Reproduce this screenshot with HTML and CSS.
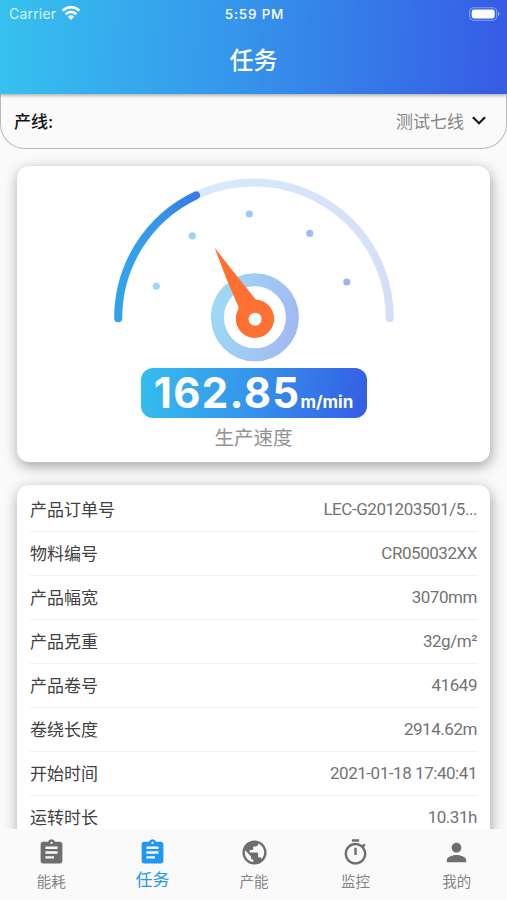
FILE: index.html
```html
<!DOCTYPE html>
<html lang="zh-CN">
<head>
<meta charset="utf-8">
<title>任务</title>
<link rel="stylesheet" href="styles.css">
</head>
<body>
<div class="app">
  <header class="header">
    <div class="status">
      <div class="carrier"><span>Carrier</span>
        <svg width="20" height="16" viewBox="0 0 20 16" fill="none" stroke="#fff" stroke-width="2.7"><path d="M1.6 5.700Q10-1.400 18.400 5.700M4.600 9.200Q10 4.700 15.400 9.200"/><path d="M6.800 11.500Q10 8.900 13.200 11.500L10 14.900Z" fill="#fff" stroke="none"/></svg>
      </div>
      <div class="clock">5:59 PM</div>
      <div class="battery">
        <svg width="31" height="14" viewBox="0 0 31 14"><rect x=".7" y=".7" width="27" height="12.6" rx="4" fill="none" stroke="#fff" stroke-opacity=".4" stroke-width="1.1"/><rect x="2.7" y="2.6" width="23" height="8.800" rx="2.3" fill="#fff"/><path d="M29 4.800q1.600.6 1.600 2.200T29 9.200z" fill="#fff" fill-opacity=".45"/></svg>
      </div>
    </div>
    <h1 class="title">任务</h1>
  </header>
  <main class="content">
    <div class="line-select">
      <span class="line-label">产线:</span>
      <span class="line-value">测试七线<svg width="14" height="9" viewBox="0 0 14 9" fill="none" stroke="#151515" stroke-width="2.1"><path d="M.9 1.200 7 7.200l6.100-6"/></svg></span>
    </div>
    <section class="card gauge-card">
      <svg class="gauge" width="290" height="195" viewBox="109 169 290 195">
        <defs>
          <linearGradient id="track" x1="0" x2="1" y1="0" y2="0"><stop stop-color="#d6effc"/><stop offset="1" stop-color="#d7dff8"/></linearGradient>
          <linearGradient id="fill" x1="0" x2="1" y1=".3" y2="0"><stop stop-color="#32a3ea"/><stop offset=".45" stop-color="#3597eb"/><stop offset="1" stop-color="#357ce6"/></linearGradient>
          <linearGradient id="ring" gradientUnits="userSpaceOnUse" x1="211" x2="299" y1="308" y2="328"><stop stop-color="#9edaf5"/><stop offset="1" stop-color="#a2b8f2"/></linearGradient>
        </defs>
        <path d="M118.200 318.200A135.800 135.800 0 0 1 389.800 318.200" fill="none" stroke="url(#track)" stroke-width="8" stroke-linecap="round"/>
        <path d="M118.200 318.200A135.800 135.800 0 0 1 196 195.300" fill="none" stroke="url(#fill)" stroke-width="8" stroke-linecap="round"/>
        <circle cx="156.3" cy="286.2" r="3.6" fill="#a1d7f2"/><circle cx="192.3" cy="235.8" r="3.6" fill="#a0d2f2"/><circle cx="249.3" cy="214" r="3.6" fill="#a0cbf0"/><circle cx="309.8" cy="233.4" r="3.6" fill="#a0bdf0"/><circle cx="346.8" cy="282" r="3.6" fill="#a0b5ee"/>
        <circle cx="254.9" cy="317.3" r="37.5" fill="none" stroke="url(#ring)" stroke-width="13"/>
        <path d="M214.600 247.400Q227 264 256 299.800A19 19 0 1 1 238.400 309.200L238.500 307Q225 277 214.600 247.400Z" fill="#ff7033"/>
        <circle cx="255" cy="318.8" r="19" fill="#ff7033"/>
        <circle cx="255.1" cy="319.2" r="6.5" fill="#fff"/>
      </svg>
      <div class="speed"><span class="speed-num">162.85</span><span class="speed-unit">m/min</span></div>
      <div class="caption">生产速度</div>
    </section>
    <section class="card list">
      <div class="row"><span>产品订单号</span><span class="val">LEC-G201203501/5...</span></div>
      <div class="row"><span>物料编号</span><span class="val">CR050032XX</span></div>
      <div class="row"><span>产品幅宽</span><span class="val">3070mm</span></div>
      <div class="row"><span>产品克重</span><span class="val">32g/m²</span></div>
      <div class="row"><span>产品卷号</span><span class="val">41649</span></div>
      <div class="row"><span>卷绕长度</span><span class="val">2914.62m</span></div>
      <div class="row"><span>开始时间</span><span class="val">2021-01-18 17:40:41</span></div>
      <div class="row"><span>运转时长</span><span class="val">10.31h</span></div>
    </section>
  </main>
  <nav class="tabs">
    <div class="tab"><svg viewBox="0 0 24 24"><path d="M19 3h-4.180C14.400 1.840 13.300 1 12 1s-2.400.840-2.820 2H5c-1.100 0-2 .9-2 2v14c0 1.100.9 2 2 2h14c1.100 0 2-.9 2-2V5c0-1.100-.9-2-2-2zm-7 0c.55 0 1 .45 1 1s-.45 1-1 1-1-.45-1-1 .45-1 1-1zm2 14H7v-2h7v2zm3-4H7v-2h10v2zm0-4H7V7h10v2z"/></svg><span>能耗</span></div>
    <div class="tab active"><svg viewBox="0 0 24 24"><path d="M19 3h-4.180C14.400 1.840 13.300 1 12 1s-2.400.840-2.820 2H5c-1.100 0-2 .9-2 2v14c0 1.100.9 2 2 2h14c1.100 0 2-.9 2-2V5c0-1.100-.9-2-2-2zm-7 0c.55 0 1 .45 1 1s-.45 1-1 1-1-.45-1-1 .45-1 1-1zm2 14H7v-2h7v2zm3-4H7v-2h10v2zm0-4H7V7h10v2z"/></svg><span>任务</span></div>
    <div class="tab"><svg viewBox="0 0 24 24"><path d="M12 2C6.480 2 2 6.480 2 12s4.480 10 10 10 10-4.480 10-10S17.520 2 12 2zm-1 17.930c-3.950-.49-7-3.850-7-7.930 0-.62.080-1.210.21-1.790L9 15v1c0 1.100.9 2 2 2v1.930zm6.900-2.540c-.26-.81-1-1.390-1.900-1.390h-1v-3c0-.55-.45-1-1-1H8v-2h2c.55 0 1-.45 1-1V7h2c1.100 0 2-.9 2-2v-.41c2.930 1.190 5 4.060 5 7.410 0 2.080-.8 3.970-2.100 5.390z"/></svg><span>产能</span></div>
    <div class="tab"><svg viewBox="0 0 24 24"><path d="M15 1H9v2h6V1zm-4 13h2V8h-2v6zm8.030-6.610l1.420-1.420c-.43-.51-.9-.99-1.410-1.410l-1.420 1.420C16.070 4.740 14.120 4 12 4c-4.970 0-9 4.030-9 9s4.020 9 9 9 9-4.030 9-9c0-2.120-.74-4.070-1.970-5.610zM12 20c-3.870 0-7-3.130-7-7s3.130-7 7-7 7 3.130 7 7-3.130 7-7 7z"/></svg><span>监控</span></div>
    <div class="tab"><svg viewBox="0 0 24 24"><path d="M12 12c2.210 0 4-1.790 4-4s-1.790-4-4-4-4 1.790-4 4 1.790 4 4 4zm0 2c-2.670 0-8 1.340-8 4v2h16v-2c0-2.660-5.330-4-8-4z"/></svg><span>我的</span></div>
  </nav>
</div>
</body>
</html>
```

FILE: styles.css
```css
* { box-sizing: border-box; }
body { margin: 0; font-family: Inter, "Noto Sans CJK SC", sans-serif; }
.app { width: 507px; height: 900px; display: flex; flex-direction: column; overflow: hidden; background: #fafafa; }
.header { flex: none; height: 94px; color: #fff; background: linear-gradient(93deg, #36c1ef, #3597eb 45%, #365be5); box-shadow: 0 1px 4px rgba(0,0,0,.4); z-index: 1; }
.status { display: grid; grid-template-columns: 1fr 1fr 1fr; align-items: center; height: 27px; padding: 0 7px 0 9px; font-size: 14px; }
.carrier { display: flex; align-items: center; gap: 5px; color: #d8f3fc; letter-spacing: .2px; }
.carrier svg { margin-top: -1px; }
.clock { text-align: center; font-weight: 500; letter-spacing: .8px; font-size: 13.5px; }
.battery { display: flex; justify-content: flex-end; }
.title { margin: 16px 0 0; text-align: center; font-size: 24px; line-height: 36px; font-weight: 500; }
.content { flex: 1; min-height: 0; overflow: hidden; }
.line-select { height: 55px; display: flex; justify-content: space-between; align-items: center; padding: 0 20px 1px 13px; border: 1px solid #b9b9b9; border-top: 0; border-radius: 0 0 25px 25px; font-size: 17px; }
.line-label { font-weight: 500; color: #111; }
.line-value { display: flex; align-items: center; gap: 8px; color: #888; }
.card { margin: 0 17px; background: #fff; border-radius: 12px; box-shadow: 1px 4px 14px rgba(0,0,0,.36); }
.gauge-card { margin-top: 17px; height: 296px; padding-top: 3px; display: flex; flex-direction: column; align-items: center; }
.gauge { flex: none; display: block; }
.speed { flex: none; width: 226px; height: 50px; margin-top: 3.5px; border-radius: 12px; background: linear-gradient(100deg, #34bdef, #3597eb 45%, #355de5); color: #fff; display: flex; align-items: baseline; justify-content: center; font-weight: 700; }
.speed-num { font-size: 42px; line-height: 50px; letter-spacing: 1.3px; }
.speed-unit { font-size: 17px; }
.caption { margin-top: 6.5px; font-size: 19.5px; line-height: 28px; color: #939393; }
.list { margin-top: 23px; height: 400px; padding: 3px 13px 0; }
.row { height: 44px; display: flex; justify-content: space-between; align-items: center; border-bottom: 1px solid #f2f2f2; font-size: 17px; color: #414141; }
.row > :first-child { margin-top: -2px; }
.val { font-family: Roboto, sans-serif; font-size: 17px; letter-spacing: -.45px; color: #737373; margin-top: -2px; }
.tabs { flex: none; height: 71px; display: flex; background: #fafafa; z-index: 2; }
.tab { flex: 1; display: flex; flex-direction: column; align-items: center; padding: 9px 0 0 1px; color: #858585; font-size: 14.5px; line-height: 24px; }
.tab svg { width: 29px; height: 29px; fill: #6e6e6e; flex: none; }
.tab span { margin-top: 3px; }
.tab.active { color: #2196f3; font-size: 17px; }
.tab.active span { margin-top: 1px; }
.tab.active svg { fill: #2196f3; }
```
